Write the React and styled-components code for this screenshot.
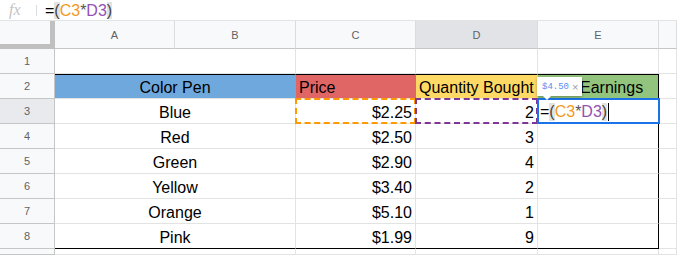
import React from 'react';
import styled, { createGlobalStyle } from 'styled-components';

const GRID = '#e2e3e3';
const HEAD_LINE = '#c4c7c5';
const ORANGE = '#f29a1f';
const PURPLE = '#9451b3';

const rows = [
    { n: 3, name: 'Blue', price: '$2.25', qty: '2' },
    { n: 4, name: 'Red', price: '$2.50', qty: '3' },
    { n: 5, name: 'Green', price: '$2.90', qty: '4' },
    { n: 6, name: 'Yellow', price: '$3.40', qty: '2' },
    { n: 7, name: 'Orange', price: '$5.10', qty: '1' },
    { n: 8, name: 'Pink', price: '$1.99', qty: '9' },
];

const Formula = () => (
    <>
        <span>=</span>
        <Paren>(</Paren>
        <Ref $c={ORANGE}>C3</Ref>
        <Op>*</Op>
        <Ref $c={PURPLE}>D3</Ref>
        <Paren>)</Paren>
    </>
);

const App = () => {
    return (
        <Page>
            <GlobalStyle />
            <FormulaBar>
                <Fx>fx</Fx>
                <Divider />
                <FormulaText>
                    <Formula />
                </FormulaText>
            </FormulaBar>

            <Sheet>
                <Corner />
                <ColHead>A</ColHead>
                <ColHead>B</ColHead>
                <ColHead>C</ColHead>
                <ColHead $active>D</ColHead>
                <ColHead>E</ColHead>
                <ColHead />

                <RowHead>1</RowHead>
                <Cell $span={2} />
                <Cell />
                <Cell />
                <Cell />
                <Cell />

                <RowHead>2</RowHead>
                <Cell $span={2} $align='center' $bg='#6fa8dc' $top>Color Pen</Cell>
                <Cell $bg='#e06666' $top>Price</Cell>
                <Cell $bg='#ffd966' $top>Quantity Bought</Cell>
                {/* the "Total " part sits under the value tooltip */}
                <Cell $bg='#93c47d' $top $edge $indent={42}>Earnings</Cell>
                <Cell />

                {rows.map((r) => (
                    <React.Fragment key={r.n}>
                        <RowHead $active={r.n === 3}>{r.n}</RowHead>
                        <Cell $span={2} $align='center' $last={r.n === 8}>{r.name}</Cell>
                        <Cell $align='right' $last={r.n === 8}>
                            {r.price}
                            {r.n === 3 && <Marquee $c='#ff9900' />}
                        </Cell>
                        <Cell $align='right' $last={r.n === 8}>
                            {r.qty}
                            {r.n === 3 && <Marquee $c='#7e3794' />}
                        </Cell>
                        <Cell $edge $last={r.n === 8}>
                            {r.n === 3 && (
                                <Editor>
                                    <Tooltip>
                                        <TipValue>$4.50</TipValue>
                                        <TipClose>×</TipClose>
                                    </Tooltip>
                                    <Formula />
                                    <Caret />
                                </Editor>
                            )}
                        </Cell>
                        <Cell />
                    </React.Fragment>
                ))}

                <RowHead />
                <Cell $span={2} />
                <Cell />
                <Cell />
                <Cell />
                <Cell />
            </Sheet>
        </Page>
    );
};

const GlobalStyle = createGlobalStyle`
    html, body {
        margin: 0;
        padding: 0;
        background: #fff;
        overflow: hidden;
    }
    body {
        font-family: "Liberation Sans", Arial, sans-serif;
    }
`;

const Page = styled.div`
    width: 677px;
    height: 255px;
    display: flex;
    flex-direction: column;
    overflow: hidden;
`;

const FormulaBar = styled.div`
    height: 21px;
    flex-shrink: 0;
    box-sizing: border-box;
    border-bottom: 1px solid ${GRID};
    display: flex;
    align-items: center;
`;

const Fx = styled.span`
    width: 27px;
    padding-left: 9px;
    box-sizing: border-box;
    font-family: "Liberation Serif", serif;
    font-style: italic;
    font-size: 16px;
    line-height: 18px;
    color: #c4c4c4;
`;

const Divider = styled.span`
    width: 1px;
    height: 11px;
    background: #dadce0;
    margin: 0 8px 0 9px;
`;

const FormulaText = styled.div`
    display: flex;
    font-size: 16px;
    line-height: 17px;
    color: #000;
`;

const Paren = styled.span`
    background: #e3e3e3;
    color: #444;
`;

const Ref = styled.span`
    color: ${(p) => p.$c};
`;

const Op = styled.span`
    color: #555;
`;

const Sheet = styled.div`
    flex: 1;
    display: grid;
    grid-template-columns: 55px 120px 121px 120px 122px 121px 1fr;
    grid-template-rows: 28px repeat(8, 25px) 1fr;
`;

const Corner = styled.div`
    box-sizing: border-box;
    background: #f8f9fa;
    border-right: 5px solid #c0c0c0;
    border-bottom: 5px solid #c0c0c0;
`;

const ColHead = styled.div`
    box-sizing: border-box;
    background: ${(p) => (p.$active ? '#e1e3e6' : '#f8f9fa')};
    border-right: 1px solid #dadce0;
    border-bottom: 1px solid ${HEAD_LINE};
    display: flex;
    align-items: center;
    justify-content: center;
    font-size: 11px;
    color: #5f6368;
`;

const RowHead = styled.div`
    box-sizing: border-box;
    background: ${(p) => (p.$active ? '#e8eaed' : '#f8f9fa')};
    border-right: 1px solid ${HEAD_LINE};
    border-bottom: 1px solid ${HEAD_LINE};
    display: flex;
    align-items: center;
    justify-content: center;
    font-size: 11px;
    color: #5f6368;
`;

const Cell = styled.div`
    position: relative;
    box-sizing: border-box;
    grid-column: span ${(p) => p.$span || 1};
    background: ${(p) => p.$bg || '#fff'};
    border-right: 1px solid ${(p) => (p.$edge ? '#000' : p.$bg || GRID)};
    border-bottom: 1px solid ${(p) => (p.$last ? '#000' : GRID)};
    border-top: ${(p) => (p.$top ? '1px solid #000' : 'none')};
    display: flex;
    align-items: flex-end;
    justify-content: ${(p) =>
        p.$align === 'center' ? 'center' : p.$align === 'right' ? 'flex-end' : 'flex-start'};
    padding: 0 3px 1px ${(p) => (p.$indent ? p.$indent : 3)}px;
    font-size: 16px;
    line-height: 18px;
    color: #000;
    white-space: nowrap;
`;

const Marquee = styled.div`
    position: absolute;
    top: -1px;
    left: -1px;
    right: -1px;
    bottom: -1px;
    border: 2px dashed ${(p) => p.$c};
    pointer-events: none;
    z-index: 2;
`;

const Editor = styled.div`
    position: absolute;
    top: -1px;
    left: -1px;
    right: -2px;
    bottom: -1px;
    box-sizing: border-box;
    border: 2px solid #1a73e8;
    background: #fff;
    z-index: 3;
    display: flex;
    align-items: flex-end;
    padding: 0 0 1px 1px;
    font-size: 16px;
    line-height: 18px;
`;

const Caret = styled.span`
    width: 1px;
    height: 18px;
    background: #000;
    margin-left: 1px;
`;

const Tooltip = styled.div`
    position: absolute;
    left: -2px;
    bottom: calc(100% + 4px);
    height: 19px;
    box-sizing: border-box;
    padding: 0 4px 0 5px;
    background: #fff;
    box-shadow: 0 1px 3px rgba(0, 0, 0, 0.3);
    display: flex;
    align-items: center;
    gap: 3px;
    &::after {
        content: '';
        position: absolute;
        left: 6px;
        top: 100%;
        border-left: 4px solid transparent;
        border-right: 4px solid transparent;
        border-top: 4px solid #fff;
    }
`;

const TipValue = styled.span`
    font-family: "Liberation Mono", monospace;
    font-size: 9px;
    color: #5b8def;
`;

const TipClose = styled.span`
    font-size: 11px;
    color: #9aa0a6;
`;

export default App;
